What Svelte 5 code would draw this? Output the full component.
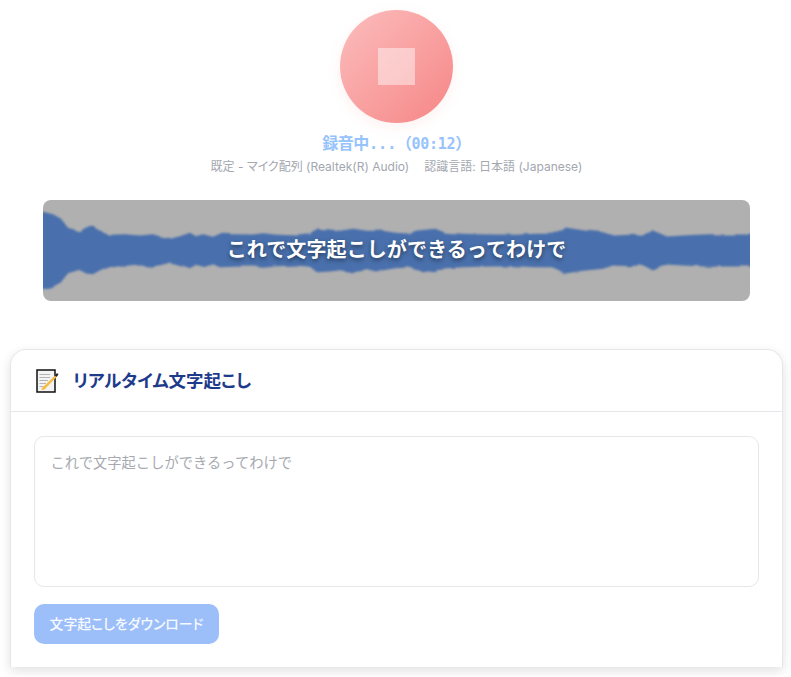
<script>
  let envelope = [
    [33, 37.7], [43, 37.7], [53, 35.3], [61, 30.7], [68, 21.7], [80, 18.3], [86, 22], [93, 22.7], [100, 18.7],
    [110, 14.7], [126, 15.3], [140, 14], [153, 15.3], [170, 11], [180, 13.3], [190, 16.7], [196, 13.3],
    [203, 15.3], [213, 12.7], [220, 15.7], [233, 15.3], [253, 15], [263, 16.3], [277, 14.7], [297, 14],
    [310, 15.3], [317, 20.7], [330, 20], [340, 18.7], [353, 20.7], [367, 18.7], [383, 18.7], [395, 16.7],
    [408, 16], [418, 19], [435, 20.7], [445, 17], [462, 15.7], [478, 15.3], [495, 15], [515, 14.7],
    [535, 15.7], [552, 15.7], [558, 18.3], [565, 22], [570, 21.3], [583, 19.3], [603, 17.3], [613, 14],
    [630, 14.7], [643, 13.7], [653, 19], [667, 13], [687, 14.3], [710, 15.3], [730, 15], [760, 15],
  ];

  let center = 50.5;
  let upper = envelope.map(([x, h]) => [x - 43, center - h - 1]);
  let lower = envelope.map(([x, h]) => [x - 43, center + h + 1]).reverse();
  let wavePoints = [...upper, ...lower].map((p) => p.join(",")).join(" ");
</script>

<main>
  <section class="recorder">
    <button class="record" aria-label="録音停止"><span class="stop"></span></button>
    <div class="status">録音中...（<span class="clock">00:12</span>）</div>
    <div class="device">
      <span>既定 - マイク配列 (Realtek(R) Audio)</span>
      <span>認識言語: 日本語 (Japanese)</span>
    </div>
  </section>

  <div class="wave">
    <svg viewBox="0 0 707 101" width="707" height="101" aria-hidden="true">
      <defs>
        <filter id="soft" filterUnits="userSpaceOnUse" x="-20" y="0" width="750" height="101">
          <feTurbulence type="fractalNoise" baseFrequency="0.07" numOctaves="2" seed="4" />
          <feDisplacementMap in="SourceGraphic" scale="3" xChannelSelector="G" yChannelSelector="R" />
          <feGaussianBlur stdDeviation="1.2" />
        </filter>
      </defs>
      <polygon points={wavePoints} fill="#4a6fac" filter="url(#soft)" />
    </svg>
    <div class="live">これで文字起こしができるってわけで</div>
  </div>

  <section class="card">
    <header>
      <svg class="memo" viewBox="0 0 24 24" width="24" height="24" aria-hidden="true">
        <path d="M1 1H19V23H1Z" fill="#f3f3f3" stroke="#111" stroke-width="1.5" />
        <path d="M3.500 5.500H14M3.500 8.500H14M3.500 11.500H12M3.500 14.500H10M3.500 17.500H7.500" stroke="#b4b4b4" stroke-width="1" />
        <path d="M6 19L19 6.500L20.500 8L8.500 20.500L5.500 21Z" fill="#f6bd45" />
        <path d="M19 6.500L21 4L22.500 5.500L20.500 8Z" fill="#222" />
      </svg>
      <h2>リアルタイム文字起こし</h2>
    </header>
    <div class="body">
      <textarea readonly placeholder="これで文字起こしができるってわけで"></textarea>
      <button class="download" disabled>文字起こしをダウンロード</button>
    </div>
  </section>
</main>

<style>
  :global(body) {
    background: #fff;
    font-family: Inter, "Noto Sans CJK JP", sans-serif;
  }
  main {
    display: flex;
    flex-direction: column;
    align-items: center;
    padding: 10px 8px 9px 10px;
    box-sizing: border-box;
    width: 791px;
  }
  .recorder {
    display: flex;
    flex-direction: column;
    align-items: center;
    height: 190px;
  }
  .record {
    width: 113px;
    height: 113px;
    padding: 0;
    border: none;
    border-radius: 50%;
    background: linear-gradient(135deg, #fcbdbd, #f68686);
    box-shadow: 0 4px 14px rgba(248, 130, 130, 0.12);
    display: flex;
    align-items: center;
    justify-content: center;
  }
  .stop {
    width: 37px;
    height: 37px;
    background: rgba(255, 255, 255, 0.45);
  }
  .status {
    margin-top: 10px;
    font-family: "DejaVu Sans Mono", "Noto Sans CJK JP", monospace;
    font-size: 16px;
    font-weight: 700;
    line-height: 22px;
    letter-spacing: -0.5px;
    color: #96c3fb;
  }
  .clock {
    font-size: 15px;
    letter-spacing: -0.3px;
  }
  .device {
    margin-top: 4px;
    display: flex;
    gap: 15px;
    font-size: 12px;
    line-height: 15px;
    font-feature-settings: "palt";
    color: #a3a7af;
  }
  .wave {
    position: relative;
    width: 707px;
    height: 101px;
    border-radius: 8px;
    overflow: hidden;
    background: #b0b0b0;
    flex-shrink: 0;
  }
  .wave svg {
    display: block;
  }
  .live {
    position: absolute;
    inset: 0;
    padding-bottom: 5px;
    display: flex;
    align-items: center;
    justify-content: center;
    font-size: 20px;
    font-weight: 700;
    letter-spacing: 0.1px;
    color: #fff;
    text-shadow: 0 2px 4px rgba(0, 0, 0, 0.5);
  }
  .card {
    width: 773px;
    height: 318px;
    margin-top: 48px;
    box-sizing: border-box;
    background: #fff;
    border: 1px solid #e5e7eb;
    border-bottom: none;
    border-radius: 16px 16px 0 0;
    box-shadow: 0 4px 12px rgba(0, 0, 0, 0.12);
    flex-shrink: 0;
  }
  header {
    display: flex;
    align-items: center;
    gap: 13px;
    height: 61px;
    padding-left: 25px;
    border-bottom: 1px solid #e5e7eb;
  }
  .memo {
    flex-shrink: 0;
  }
  h2 {
    margin: 0 0 3px;
    font-size: 17.500px;
    font-weight: 700;
    font-feature-settings: "palt";
    color: #1e3a8a;
  }
  .body {
    padding: 24px 24px 0 23px;
    display: flex;
    flex-direction: column;
    align-items: flex-start;
    gap: 17px;
  }
  textarea {
    width: 725px;
    height: 151px;
    box-sizing: border-box;
    padding: 15px 15.500px;
    border: 1px solid #e5e7eb;
    border-radius: 10px;
    resize: none;
    outline: none;
    font-family: Inter, "Noto Sans CJK JP", sans-serif;
    font-size: 14.300px;
    line-height: 21px;
    display: block;
  }
  textarea::placeholder {
    color: #a7a9b0;
    opacity: 1;
  }
  .download {
    width: 185px;
    height: 40px;
    padding: 0 0 3px;
    border: none;
    border-radius: 10px;
    background: #9cbffa;
    color: #f7faff;
    font-family: Inter, "Noto Sans CJK JP", sans-serif;
    font-size: 13.900px;
    font-weight: 500;
    font-feature-settings: "palt";
  }
</style>
